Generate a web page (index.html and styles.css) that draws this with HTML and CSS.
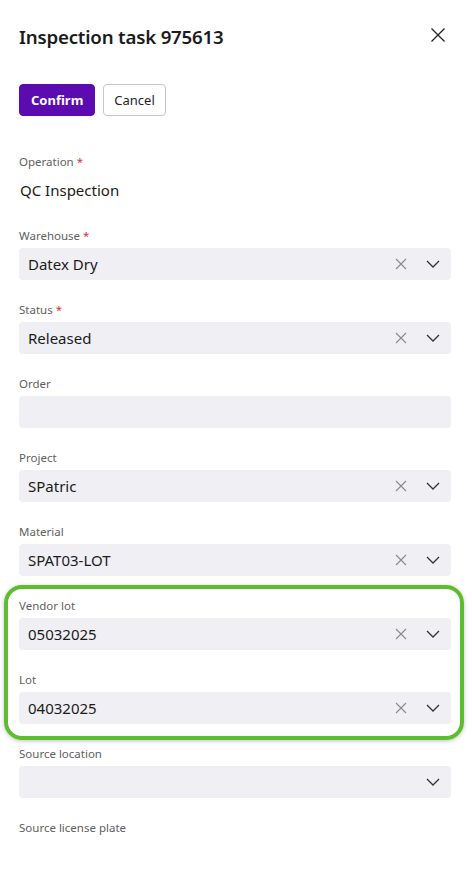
FILE: index.html
```html
<!DOCTYPE html>
<html lang="en">
<head>
    <meta charset="UTF-8">
    <meta name="viewport" content="width=device-width, initial-scale=1.0">
    <title>Inspection task 975613</title>
    <link rel="stylesheet" href="styles.css">
</head>
<body>

    <div class="panel">
        <div class="header">
            <h1>Inspection task 975613</h1>
            <button class="close" aria-label="Close">
                <svg width="16" height="16" viewBox="0 0 16 16"><path d="M1.5 1.5 L14.5 14.5 M14.5 1.5 L1.5 14.5" stroke="#222" stroke-width="1.3" fill="none"/></svg>
            </button>
        </div>

        <div class="actions">
            <button class="btn primary">Confirm</button>
            <button class="btn">Cancel</button>
        </div>

        <div class="form">
            <div class="field">
                <label>Operation <span class="req">*</span></label>
                <div class="value">QC Inspection</div>
            </div>

            <div class="field">
                <label>Warehouse <span class="req">*</span></label>
                <div class="select">
                    <span class="text">Datex Dry</span>
                    <span class="clear"><svg width="12" height="12" viewBox="0 0 12 12"><path d="M1 1 L11 11 M11 1 L1 11" stroke="#8a8a8a" stroke-width="1.1" fill="none"/></svg></span>
                    <span class="chev"><svg width="14" height="8" viewBox="0 0 14 8"><path d="M1 1 L7 7 L13 1" stroke="#333" stroke-width="1.3" fill="none"/></svg></span>
                </div>
            </div>

            <div class="field">
                <label>Status <span class="req">*</span></label>
                <div class="select">
                    <span class="text">Released</span>
                    <span class="clear"><svg width="12" height="12" viewBox="0 0 12 12"><path d="M1 1 L11 11 M11 1 L1 11" stroke="#8a8a8a" stroke-width="1.1" fill="none"/></svg></span>
                    <span class="chev"><svg width="14" height="8" viewBox="0 0 14 8"><path d="M1 1 L7 7 L13 1" stroke="#333" stroke-width="1.3" fill="none"/></svg></span>
                </div>
            </div>

            <div class="field">
                <label>Order</label>
                <div class="select"></div>
            </div>

            <div class="field">
                <label>Project</label>
                <div class="select">
                    <span class="text">SPatric</span>
                    <span class="clear"><svg width="12" height="12" viewBox="0 0 12 12"><path d="M1 1 L11 11 M11 1 L1 11" stroke="#8a8a8a" stroke-width="1.1" fill="none"/></svg></span>
                    <span class="chev"><svg width="14" height="8" viewBox="0 0 14 8"><path d="M1 1 L7 7 L13 1" stroke="#333" stroke-width="1.3" fill="none"/></svg></span>
                </div>
            </div>

            <div class="field">
                <label>Material</label>
                <div class="select">
                    <span class="text">SPAT03-LOT</span>
                    <span class="clear"><svg width="12" height="12" viewBox="0 0 12 12"><path d="M1 1 L11 11 M11 1 L1 11" stroke="#8a8a8a" stroke-width="1.1" fill="none"/></svg></span>
                    <span class="chev"><svg width="14" height="8" viewBox="0 0 14 8"><path d="M1 1 L7 7 L13 1" stroke="#333" stroke-width="1.3" fill="none"/></svg></span>
                </div>
            </div>

            <div class="highlight">
                <div class="field">
                    <label>Vendor lot</label>
                    <div class="select">
                        <span class="text">05032025</span>
                        <span class="clear"><svg width="12" height="12" viewBox="0 0 12 12"><path d="M1 1 L11 11 M11 1 L1 11" stroke="#8a8a8a" stroke-width="1.1" fill="none"/></svg></span>
                        <span class="chev"><svg width="14" height="8" viewBox="0 0 14 8"><path d="M1 1 L7 7 L13 1" stroke="#333" stroke-width="1.3" fill="none"/></svg></span>
                    </div>
                </div>

                <div class="field">
                    <label>Lot</label>
                    <div class="select">
                        <span class="text">04032025</span>
                        <span class="clear"><svg width="12" height="12" viewBox="0 0 12 12"><path d="M1 1 L11 11 M11 1 L1 11" stroke="#8a8a8a" stroke-width="1.1" fill="none"/></svg></span>
                        <span class="chev"><svg width="14" height="8" viewBox="0 0 14 8"><path d="M1 1 L7 7 L13 1" stroke="#333" stroke-width="1.3" fill="none"/></svg></span>
                    </div>
                </div>
            </div>

            <div class="field">
                <label>Source location</label>
                <div class="select">
                    <span class="text"></span>
                    <span class="chev"><svg width="14" height="8" viewBox="0 0 14 8"><path d="M1 1 L7 7 L13 1" stroke="#333" stroke-width="1.3" fill="none"/></svg></span>
                </div>
            </div>

            <div class="field">
                <label>Source license plate</label>
            </div>
        </div>
    </div>

</body>
</html>
```

FILE: styles.css
```css
body {
    font-family: "Noto Sans", "Open Sans", sans-serif;
    background-color: #fff;
    color: #1b1b1b;
    margin: 0;
}
.panel {
    padding: 0 21px 0 19px;
}
.header {
    display: flex;
    align-items: center;
    justify-content: space-between;
    height: 73px;
}
h1 {
    margin: 0;
    font-size: 18.7px;
    font-weight: 600;
    letter-spacing: -0.2px;
}
.close {
    border: none;
    background: none;
    padding: 0;
    margin-right: 3px;
    margin-top: -4px;
    width: 20px;
    height: 20px;
    display: flex;
    align-items: center;
    justify-content: center;
    cursor: pointer;
}
.actions {
    display: flex;
    gap: 8px;
    margin-top: 11px;
}
.btn {
    height: 32px;
    padding: 0 10px;
    font-family: inherit;
    font-size: 13px;
    border: 1px solid #c8c8c8;
    background: #fff;
    color: #242424;
    border-radius: 4px;
    cursor: pointer;
}
.btn.primary {
    background: #5c0bb0;
    border-color: #5c0bb0;
    color: #fff;
    font-weight: 700;
    padding: 0 11px;
}
.form {
    display: flex;
    flex-direction: column;
    gap: 22px;
    margin-top: 38px;
}
.field label {
    display: block;
    font-size: 11.5px;
    line-height: 16px;
    color: #616161;
    margin-bottom: 4px;
}
.req {
    color: #d13438;
}
.value {
    height: 32px;
    display: flex;
    align-items: center;
    font-size: 15px;
    padding-left: 1px;
}
.select {
    height: 32px;
    background: #efeff4;
    border-radius: 4px;
    display: flex;
    align-items: center;
    padding: 0 11px 0 9px;
    font-size: 15px;
}
.select .text {
    flex: 1;
}
.select .clear {
    display: flex;
    margin-right: 19px;
}
.select .chev {
    display: flex;
}
.highlight {
    position: relative;
    display: flex;
    flex-direction: column;
    gap: 22px;
}
.highlight::before {
    content: "";
    position: absolute;
    top: -13px;
    bottom: -16px;
    left: -15px;
    right: -13px;
    border: 4px solid #5cbd2e;
    border-radius: 18px;
    box-shadow: 0 1px 4px rgba(0, 0, 0, 0.25);
    pointer-events: none;
}
```
